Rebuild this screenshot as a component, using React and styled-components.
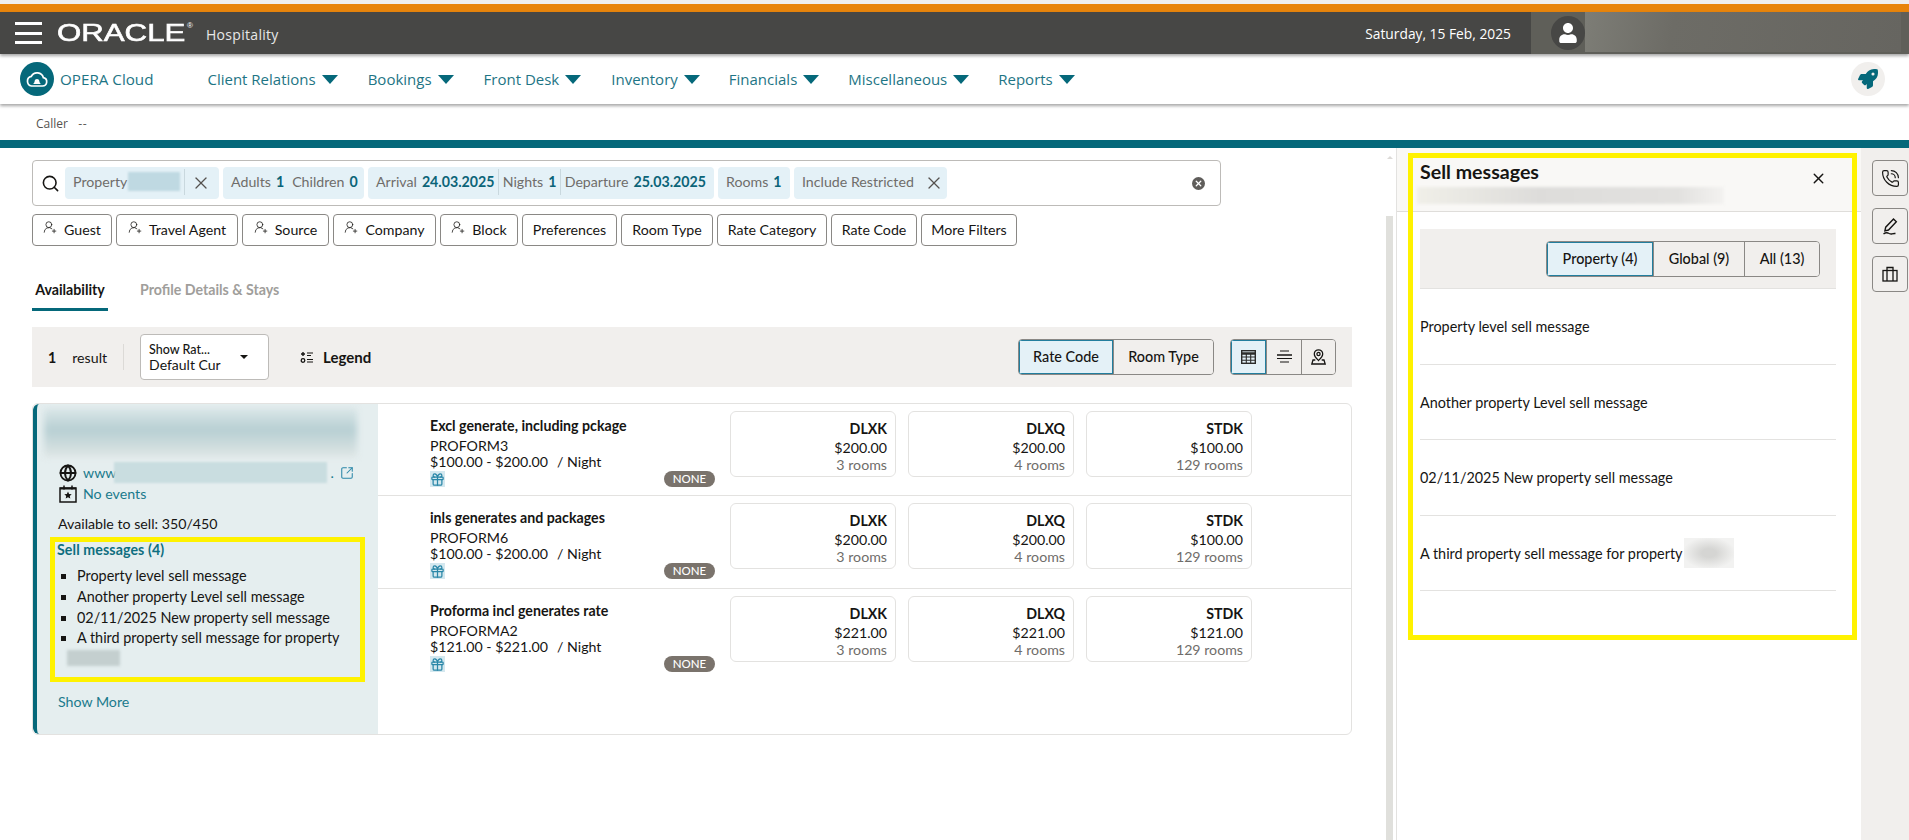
import React from "react"
import styled, { createGlobalStyle } from "styled-components"
import {
  Gift,
  Globe,
  PhoneCall,
  Search,
  SquareArrowOutUpRight,
  UserRoundPlus,
  X,
} from "lucide-react"
import { FaRocket, FaUser } from "react-icons/fa"

const GlobalStyle = createGlobalStyle`
  html, body {
    margin: 0;
    padding: 0;
    background: #fff;
    overflow: hidden;
  }
  * {
    box-sizing: border-box;
  }
  body {
    font-family: Lato, "Noto Sans", sans-serif;
    color: #161513;
    font-size: 14.2px;
  }
`

const navItems = [
  ["Client Relations", 54],
  ["Bookings", 30],
  ["Front Desk", 30],
  ["Inventory", 30],
  ["Financials", 29],
  ["Miscellaneous", 29],
  ["Reports", 29],
]

const filters = [
  ["Guest", 80, true],
  ["Travel Agent", 122, true],
  ["Source", 87, true],
  ["Company", 103, true],
  ["Block", 78, true],
  ["Preferences", 95],
  ["Room Type", 92],
  ["Rate Category", 110],
  ["Rate Code", 86],
  ["More Filters", 96],
]

const rates = [
  {
    name: "Excl generate, including pckage",
    code: "PROFORM3",
    range: "$100.00 - $200.00",
    rooms: [
      ["DLXK", "$200.00", "3 rooms"],
      ["DLXQ", "$200.00", "4 rooms"],
      ["STDK", "$100.00", "129 rooms"],
    ],
    height: 91,
  },
  {
    name: "inls generates and packages",
    code: "PROFORM6",
    range: "$100.00 - $200.00",
    rooms: [
      ["DLXK", "$200.00", "3 rooms"],
      ["DLXQ", "$200.00", "4 rooms"],
      ["STDK", "$100.00", "129 rooms"],
    ],
    height: 93,
  },
  {
    name: "Proforma incl generates rate",
    code: "PROFORMA2",
    range: "$121.00 - $221.00",
    rooms: [
      ["DLXK", "$221.00", "3 rooms"],
      ["DLXQ", "$221.00", "4 rooms"],
      ["STDK", "$121.00", "129 rooms"],
    ],
    height: 146,
  },
]

const messages = [
  "Property level sell message",
  "Another property Level sell message",
  "02/11/2025 New property sell message",
  "A third property sell message for property",
]

function CloudBell() {
  return (
    <svg width="24" height="20" viewBox="0 0 24 20" fill="none">
      <path
        d="M6.5 17h11a4.2 4.2 0 0 0 .9-8.3A6.5 6.5 0 0 0 6.3 7.4a4.9 4.9 0 0 0 .2 9.600z"
        stroke="#fff"
        strokeWidth="1.7"
      />
      <path
        d="M8 15c1-.7 1.5-1.7 1.7-3.1.2-1.2 1.1-1.9 2.3-1.9s2.1.7 2.3 1.9c.2 1.4.7 2.4 1.7 3.1z"
        fill="#fff"
      />
    </svg>
  )
}

function LegendIcon() {
  return (
    <svg width="14" height="13" viewBox="0 0 14 13" fill="none" stroke="#161513">
      <path d="M3 1v4M1 3h4" strokeWidth="1.4" />
      <circle cx="3" cy="9.5" r="1.8" strokeWidth="1.3" />
      <path d="M7 2h6M7 4.5h4M7 8.5h6M7 11h6" strokeWidth="1.2" />
    </svg>
  )
}

function TableIcon() {
  return (
    <svg width="15" height="14" viewBox="0 0 15 14" fill="none" stroke="#2b2b2a">
      <rect x="0.7" y="0.7" width="13.6" height="12.6" strokeWidth="1.4" />
      <path d="M1 3.5h13" strokeWidth="2.4" />
      <path d="M1 7h13M1 10.2h13M5.3 4v9M9.7 4v9" strokeWidth="1.1" />
    </svg>
  )
}

function CenterLinesIcon() {
  return (
    <svg width="15" height="13" viewBox="0 0 15 13" fill="none" stroke="#161513">
      <path d="M3 1h9" strokeWidth="1.2" />
      <path d="M0 5h15" strokeWidth="1.5" />
      <path d="M0 8.500h15" strokeWidth="1.2" />
      <path d="M3 12h9" strokeWidth="1.2" />
    </svg>
  )
}

function PinUserIcon() {
  return (
    <svg width="15" height="16" viewBox="0 0 15 16" fill="none" stroke="#161513" strokeWidth="1.3">
      <path d="M7.5 11.5C5.3 9.3 3.3 7.6 3.3 5A4.2 4.2 0 0 1 11.7 5c0 2.6-2 4.3-4.2 6.5z" />
      <circle cx="7.5" cy="5" r="1.6" />
      <path d="M4.3 11H2L.8 15h13.4L13 11h-2.3" />
    </svg>
  )
}

function CalendarStar() {
  return (
    <svg width="18" height="18" viewBox="0 0 18 18" fill="none" stroke="#161513">
      <path d="M1 3h16v14H1z" strokeWidth="1.5" />
      <path d="M1 3.5h16" strokeWidth="2" />
      <path d="M5 .5v4M13 .5v4" strokeWidth="1.5" />
      <path
        d="M9 6.5l1.1 2.4 2.6.3-1.9 1.800.5 2.600L9 12.300l-2.300 1.300.5-2.600-1.900-1.800 2.600-.3z"
        fill="#161513"
        stroke="none"
      />
    </svg>
  )
}

function PenIcon() {
  return (
    <svg width="19" height="19" viewBox="0 0 19 19" fill="none" stroke="#161513" strokeWidth="1.4">
      <path d="M12.5 2l2.8 2.8-7.8 8.2-3.600.9.8-3.700z" />
      <path d="M2.500 17c1.500-1.200 3-1.700 4.500-1 1.500.8 2.500 1.300 4 .8 1-.3 2-.5 3.500-.3" />
    </svg>
  )
}

function CaseIcon() {
  return (
    <svg width="16" height="16" viewBox="0 0 16 16" fill="none" stroke="#161513" strokeWidth="1.3">
      <rect x="1" y="4.5" width="14" height="10.5" />
      <path d="M5 4.5v-3h6v3M5 4.5V15M11 4.5V15" />
    </svg>
  )
}

function RateRow({ rate }) {
  return (
    <RateRowBox $height={rate.height}>
      <RateInfo>
        <RateName>{rate.name}</RateName>
        <RateCode>{rate.code}</RateCode>
        <RateRange>
          {rate.range}
          <span>/ Night</span>
        </RateRange>
        <RateFoot>
          <GiftBox>
            <Gift size={15} strokeWidth={2} />
          </GiftBox>
          <NoneBadge>NONE</NoneBadge>
        </RateFoot>
      </RateInfo>
      <Tiles>
        {rate.rooms.map(([code, price, left]) => (
          <Tile key={code}>
            <TileCode>{code}</TileCode>
            <TilePrice>{price}</TilePrice>
            <TileRooms>{left}</TileRooms>
          </Tile>
        ))}
      </Tiles>
    </RateRowBox>
  )
}

export default function App() {
  return (
    <Page>
      <GlobalStyle />
      <TopStrip />
      <OrangeBar />
      <Header>
        <Brand>
          <Burger>
            <span />
            <span />
            <span />
          </Burger>
          <OracleMark>
            <OracleWord>ORACLE</OracleWord>
            <OracleReg>®</OracleReg>
          </OracleMark>
          <HospitalityText>Hospitality</HospitalityText>
        </Brand>
        <HeaderRight>
          <DateText>Saturday, 15 Feb, 2025</DateText>
          <UserArea>
            <Avatar>
              <FaUser size={20} color="#fff" />
            </Avatar>
            <UserBlur />
          </UserArea>
        </HeaderRight>
      </Header>
      <Nav>
        <AppName>
          <AppBadge>
            <CloudBell />
          </AppBadge>
          <AppTitle>OPERA Cloud</AppTitle>
        </AppName>
        {navItems.map(([label, gap]) => (
          <NavItem key={label} $gap={gap}>
            {label}
            <Caret />
          </NavItem>
        ))}
        <RocketButton>
          <FaRocket size={20} color="#05687a" />
        </RocketButton>
      </Nav>
      <CallerRow>
        <CallerLabel>Caller</CallerLabel>
        <span>--</span>
      </CallerRow>
      <TealBar />
      <Body>
        <Main>
          <SearchBox>
            <SearchIcon>
              <Search size={19} strokeWidth={2} />
            </SearchIcon>
            <Chip $width={154}>
              <ChipLabel>Property</ChipLabel>
              <ChipBlur />
              <ChipDivider />
              <ChipClose>
                <X size={20} strokeWidth={1.5} />
              </ChipClose>
            </Chip>
            <Chip $width={141}>
              <ChipLabel>Adults</ChipLabel>
              <ChipValue>1</ChipValue>
              <ChipDivider />
              <ChipLabel>Children</ChipLabel>
              <ChipValue>0</ChipValue>
            </Chip>
            <Chip $width={346}>
              <ChipLabel>Arrival</ChipLabel>
              <ChipValue>24.03.2025</ChipValue>
              <ChipDivider />
              <ChipLabel>Nights</ChipLabel>
              <ChipValue>1</ChipValue>
              <ChipDivider />
              <ChipLabel>Departure</ChipLabel>
              <ChipValue>25.03.2025</ChipValue>
            </Chip>
            <Chip $width={72}>
              <ChipLabel>Rooms</ChipLabel>
              <ChipValue>1</ChipValue>
            </Chip>
            <Chip $width={153}>
              <ChipLabel>Include Restricted</ChipLabel>
              <ChipDivider />
              <ChipClose>
                <X size={20} strokeWidth={1.5} />
              </ChipClose>
            </Chip>
            <ClearDot>
              <X size={9} strokeWidth={3.5} color="#fff" />
            </ClearDot>
          </SearchBox>
          <FilterRow>
            {filters.map(([label, width, withIcon]) => (
              <FilterButton key={label} $width={width}>
                {withIcon && <UserRoundPlus size={14} strokeWidth={1.3} />}
                {label}
              </FilterButton>
            ))}
          </FilterRow>
          <Tabs>
            <Tab $active>Availability</Tab>
            <Tab>Profile Details &amp; Stays</Tab>
          </Tabs>
          <ResultBar>
            <ResultCount>1</ResultCount>
            <ResultText>result</ResultText>
            <ResultDivider />
            <CurrencySelect>
              <CurrencyText>
                <CurrencyTitle>Show Rat...</CurrencyTitle>
                <CurrencyValue>Default Curi</CurrencyValue>
              </CurrencyText>
              <SmallCaret />
            </CurrencySelect>
            <LegendButton>
              <LegendIcon />
              Legend
            </LegendButton>
            <ResultSpacer />
            <Segments>
              <Segment $active $width={94}>Rate Code</Segment>
              <Segment $width={100}>Room Type</Segment>
            </Segments>
            <Segments>
              <Segment $active $width={35}>
                <TableIcon />
              </Segment>
              <Segment $width={35}>
                <CenterLinesIcon />
              </Segment>
              <Segment $width={34}>
                <PinUserIcon />
              </Segment>
            </Segments>
          </ResultBar>
          <ResultCard>
            <HotelPane>
              <HotelBlur />
              <LinkRow>
                <Globe size={18} strokeWidth={2.5} color="#161513" />
                <LinkText>www</LinkText>
                <UrlBlur />
                <UrlDot>.</UrlDot>
                <ExternalIcon>
                  <SquareArrowOutUpRight size={14} strokeWidth={1.8} />
                </ExternalIcon>
              </LinkRow>
              <LinkRow>
                <CalendarStar />
                <LinkText>No events</LinkText>
              </LinkRow>
              <AvailableText>Available to sell: 350/450</AvailableText>
              <SellBox>
                <SellTitle>Sell messages (4)</SellTitle>
                <SellList>
                  {messages.map((text) => (
                    <li key={text}>{text}</li>
                  ))}
                </SellList>
                <SellBlur />
              </SellBox>
              <ShowMore>Show More</ShowMore>
            </HotelPane>
            <RateList>
              {rates.map((rate) => (
                <RateRow key={rate.code} rate={rate} />
              ))}
            </RateList>
          </ResultCard>
        </Main>
        <ScrollGutter>
          <ScrollArrow />
          <ScrollThumb />
        </ScrollGutter>
        <SidePanel>
          <PanelHeader>
            <div>
              <PanelTitle>Sell messages</PanelTitle>
              <PanelBlur />
            </div>
            <PanelClose>
              <X size={17} strokeWidth={2} />
            </PanelClose>
          </PanelHeader>
          <PanelBody>
            <PanelTabs>
              <Segments>
                <Segment $active $width={106}>Property (4)</Segment>
                <Segment $width={91}>Global (9)</Segment>
                <Segment $width={75}>All (13)</Segment>
              </Segments>
            </PanelTabs>
            {messages.map((text, i) => (
              <MessageRow key={text}>
                {text}
                {i === 3 && <MessageBlur />}
              </MessageRow>
            ))}
          </PanelBody>
          <Highlight />
        </SidePanel>
        <ToolRail>
          <ToolButton>
            <PhoneCall size={19} strokeWidth={1.5} />
          </ToolButton>
          <ToolButton>
            <PenIcon />
          </ToolButton>
          <ToolButton>
            <CaseIcon />
          </ToolButton>
        </ToolRail>
      </Body>
    </Page>
  )
}

const Page = styled.div`
  width: 1909px;
  height: 840px;
  display: flex;
  flex-direction: column;
  overflow: hidden;
`
const TopStrip = styled.div`
  height: 4px;
  background: #efefef;
`
const OrangeBar = styled.div`
  height: 8px;
  background: #e8850c;
`
const Header = styled.header`
  height: 42px;
  background: #474745;
  color: #fff;
  display: flex;
  justify-content: space-between;
  box-shadow: 0 2px 3px rgba(0, 0, 0, 0.35);
  position: relative;
  z-index: 2;
`
const Brand = styled.div`
  display: flex;
  align-items: center;
  padding-left: 15px;
`
const Burger = styled.div`
  width: 27px;
  height: 22px;
  display: flex;
  flex-direction: column;
  justify-content: space-between;
  margin-right: 15px;
  span {
    height: 3px;
    background: #fff;
  }
`
const OracleMark = styled.div`
  width: 138px;
  height: 24px;
  margin-right: 11px;
  display: flex;
  align-items: flex-start;
`
const OracleWord = styled.div`
  width: 130px;
  font-family: "Liberation Sans", sans-serif;
  font-size: 24px;
  line-height: 24px;
  color: #fff;
  -webkit-text-stroke: 0.6px #fff;
  transform: scaleX(1.3);
  transform-origin: left center;
  white-space: nowrap;
`
const OracleReg = styled.span`
  font-family: "Liberation Sans", sans-serif;
  font-size: 8px;
  line-height: 10px;
  color: #fff;
`
const HospitalityText = styled.span`
  font-family: "Open Sans", sans-serif;
  font-size: 14px;
  color: #e8e8e8;
  letter-spacing: 0.3px;
  margin-top: 2px;
`
const HeaderRight = styled.div`
  display: flex;
  align-items: stretch;
`
const DateText = styled.div`
  font-family: "Open Sans", sans-serif;
  font-size: 13.8px;
  align-self: center;
  margin-right: 20px;
`
const UserArea = styled.div`
  width: 378px;
  background: #5f5f59;
  display: flex;
  align-items: center;
  padding-left: 20px;
  overflow: hidden;
`
const Avatar = styled.div`
  width: 34px;
  height: 34px;
  border-radius: 50%;
  background: #474745;
  display: flex;
  align-items: center;
  justify-content: center;
  flex-shrink: 0;
`
const UserBlur = styled.div`
  width: 316px;
  height: 40px;
  margin-top: -2px;
  background: linear-gradient(100deg, #7d7d76 0%, #6d6c66 28%, #666560 100%);
`
const Nav = styled.nav`
  height: 50px;
  background: #fff;
  display: flex;
  align-items: center;
  padding-left: 20px;
  box-shadow: 0 2px 3px rgba(0, 0, 0, 0.35);
  position: relative;
  z-index: 1;
`
const AppName = styled.div`
  display: flex;
  align-items: center;
  gap: 6px;
`
const AppBadge = styled.div`
  width: 34px;
  height: 34px;
  border-radius: 50%;
  background: #05687a;
  display: flex;
  align-items: center;
  justify-content: center;
`
const AppTitle = styled.span`
  font-family: "Open Sans", sans-serif;
  font-size: 15.2px;
  color: #1e7585;
`
const NavItem = styled.div`
  font-family: "Open Sans", sans-serif;
  font-size: 15px;
  color: #1e7585;
  display: flex;
  align-items: center;
  gap: 6px;
  margin-left: ${(p) => p.$gap}px;
`
const Caret = styled.span`
  width: 0;
  height: 0;
  border-left: 8px solid transparent;
  border-right: 8px solid transparent;
  border-top: 9px solid #05687a;
`
const RocketButton = styled.div`
  width: 34px;
  height: 34px;
  border-radius: 50%;
  background: #f1efed;
  display: flex;
  align-items: center;
  justify-content: center;
  margin-left: auto;
  margin-right: 24px;
`
const CallerRow = styled.div`
  height: 36px;
  display: flex;
  align-items: center;
  padding: 3px 0 0 36px;
  gap: 10px;
  font-size: 12px;
  color: #55524f;
`
const CallerLabel = styled.span`
  font-family: "Open Sans", sans-serif;
`
const TealBar = styled.div`
  height: 8px;
  background: #05687a;
`
const Body = styled.div`
  flex: 1;
  display: flex;
  min-height: 0;
`
const Main = styled.main`
  width: 1386px;
  padding: 12px 0 0 32px;
`
const SearchBox = styled.div`
  width: 1189px;
  height: 46px;
  border: 1px solid #bdbbb8;
  border-radius: 4px;
  display: flex;
  align-items: center;
  gap: 4px;
  padding-left: 8px;
`
const SearchIcon = styled.div`
  width: 20px;
  display: flex;
`
const Chip = styled.div`
  width: ${(p) => p.$width}px;
  height: 32px;
  background: #e4f1f7;
  border-radius: 4px;
  display: flex;
  align-items: center;
  padding: 0 8px 3px;
  gap: 4px;
  white-space: nowrap;
`
const ChipLabel = styled.span`
  color: #6f6d6a;
`
const ChipValue = styled.span`
  color: #0b6478;
  font-weight: 700;
  margin-left: 1px;
`
const ChipDivider = styled.span`
  width: 1px;
  height: 26px;
  background: #c9d8de;
`
const ChipBlur = styled.span`
  width: 57px;
  height: 19px;
  margin-left: -3px;
  background: #bfd9e2;
  filter: blur(1px);
`
const ChipClose = styled.span`
  display: flex;
  color: #55524f;
  margin: 2px 0 0 2px;
`
const ClearDot = styled.div`
  width: 13px;
  height: 13px;
  border-radius: 50%;
  background: #5f5d5a;
  display: flex;
  align-items: center;
  justify-content: center;
  margin-left: auto;
  margin-right: 15px;
`
const FilterRow = styled.div`
  display: flex;
  gap: 4px;
  margin-top: 8px;
`
const FilterButton = styled.div`
  width: ${(p) => p.$width}px;
  height: 32px;
  border: 1px solid #8a8885;
  border-radius: 4px;
  display: flex;
  align-items: center;
  justify-content: center;
  gap: 7px;
  background: #fff;
  white-space: nowrap;
  padding-bottom: 2px;
  svg {
    margin-top: -4px;
  }
`
const Tabs = styled.div`
  display: flex;
  gap: 32px;
  margin-top: 33px;
  height: 32px;
`
const Tab = styled.div`
  width: ${(p) => (p.$active ? "76px" : "auto")};
  height: 32px;
  text-align: center;
  font-weight: 700;
  line-height: 22px;
  color: ${(p) => (p.$active ? "#161513" : "#a09e9b")};
  border-bottom: ${(p) => (p.$active ? "3px solid #05687a" : "0")};
`
const ResultBar = styled.div`
  width: 1320px;
  height: 60px;
  margin-top: 16px;
  background: #f1efed;
  display: flex;
  align-items: center;
  padding: 0 16px;
`
const ResultCount = styled.span`
  font-weight: 700;
  margin-right: 16px;
`
const ResultText = styled.span`
  margin-right: 16px;
`
const ResultDivider = styled.span`
  width: 1px;
  height: 26px;
  background: #dcdad7;
  margin-right: 16px;
`
const CurrencySelect = styled.div`
  width: 129px;
  height: 46px;
  background: #fff;
  border: 1px solid #bdbbb8;
  border-radius: 4px;
  display: flex;
  align-items: center;
  justify-content: space-between;
  padding: 0 20px 0 8px;
`
const CurrencyText = styled.div`
  width: 72px;
  overflow: hidden;
  white-space: nowrap;
  line-height: 15px;
`
const CurrencyTitle = styled.div`
  font-size: 12.5px;
  font-weight: 500;
`
const CurrencyValue = styled.div`
  font-size: 14px;
`
const SmallCaret = styled.span`
  width: 0;
  height: 0;
  border-left: 4px solid transparent;
  border-right: 4px solid transparent;
  border-top: 4px solid #161513;
`
const LegendButton = styled.div`
  display: flex;
  align-items: center;
  gap: 9px;
  font-size: 15px;
  font-weight: 700;
  margin-left: 31px;
`
const ResultSpacer = styled.div`
  flex: 1;
`
const Segments = styled.div`
  display: flex;
  height: 36px;
  margin-left: 16px;
  border: 1px solid #8a8885;
  border-radius: 4px;
  overflow: hidden;
`
const Segment = styled.div`
  width: ${(p) => p.$width}px;
  display: flex;
  align-items: center;
  justify-content: center;
  background: ${(p) => (p.$active ? "#e4f1f7" : "#f1efed")};
  font-weight: 500;
  font-size: 14.4px;
  padding-bottom: 1px;
  box-shadow: ${(p) => (p.$active ? "inset 0 0 0 1px #227e9e" : "none")};
  & + & {
    border-left: 1px solid #8a8885;
  }
`
const ResultCard = styled.div`
  width: 1320px;
  height: 332px;
  margin-top: 16px;
  border: 1px solid #e3e2e0;
  border-radius: 6px;
  display: flex;
  overflow: hidden;
`
const HotelPane = styled.div`
  width: 345px;
  background: #e5eeef;
  border-left: 4px solid #05687a;
  border-radius: 6px 0 0 6px;
  padding: 4px 0 0 7px;
`
const HotelBlur = styled.div`
  width: 313px;
  height: 49px;
  background: linear-gradient(180deg, #dbe7e8, #b7cfd3 45%, #dfe6e5);
  filter: blur(3px);
  margin-bottom: 5px;
`
const LinkRow = styled.div`
  display: flex;
  align-items: center;
  gap: 6px;
  margin-left: 15px;
  height: 21px;
`
const LinkText = styled.span`
  color: #1a7a8c;
`
const UrlBlur = styled.span`
  width: 213px;
  height: 21px;
  margin-left: -8px;
  background: #c9dde0;
  filter: blur(1px);
`
const UrlDot = styled.span`
  color: #1a7a8c;
  margin-left: -3px;
`
const ExternalIcon = styled.span`
  display: flex;
  color: #2a87a8;
`
const AvailableText = styled.div`
  margin: 10px 0 0 14px;
  line-height: 20px;
`
const SellBox = styled.div`
  width: 315px;
  height: 145px;
  margin: 3px 0 0 6px;
  border: 5px solid #fff200;
  padding: 0 0 0 2px;
`
const SellTitle = styled.div`
  color: #0f6f80;
  font-weight: 700;
  letter-spacing: 0.1px;
  line-height: 15px;
`
const SellList = styled.ul`
  margin: 9px 0 0;
  padding: 0 0 0 20px;
  list-style: square;
  font-size: 14.4px;
  li {
    line-height: 20.8px;
  }
`
const SellBlur = styled.div`
  width: 53px;
  height: 16px;
  margin: 1px 0 0 10px;
  background: #c4cfcf;
  filter: blur(1.5px);
`
const ShowMore = styled.div`
  color: #1a7a8c;
  margin: 11px 0 0 14px;
`
const RateList = styled.div`
  flex: 1;
`
const RateRowBox = styled.div`
  height: ${(p) => p.$height}px;
  display: flex;
  padding: 7px 0 0 52px;
  & + & {
    border-top: 1px solid #e3e2e0;
  }
`
const RateInfo = styled.div`
  width: 285px;
  margin-right: 15px;
`
const RateName = styled.div`
  font-weight: 700;
  line-height: 20px;
  margin-top: 5px;
`
const RateCode = styled.div`
  line-height: 18px;
  margin-top: 1px;
`
const RateRange = styled.div`
  line-height: 16px;
  margin-top: -1px;
  display: flex;
  gap: 9px;
`
const RateFoot = styled.div`
  display: flex;
  justify-content: space-between;
  align-items: center;
  margin-top: 1px;
`
const GiftBox = styled.span`
  width: 15px;
  height: 16px;
  display: flex;
  align-items: center;
  justify-content: center;
  background: #d4e8ef;
  color: #2a87a8;
`
const NoneBadge = styled.span`
  width: 51px;
  height: 16px;
  border-radius: 8px;
  background: #7a736c;
  color: #fff;
  font-size: 11.5px;
  font-weight: 500;
  line-height: 16px;
  text-align: center;
`
const Tiles = styled.div`
  display: flex;
  gap: 12px;
`
const Tile = styled.div`
  width: 166px;
  height: 66px;
  border: 1px solid #e3e2e0;
  border-radius: 6px;
  padding: 8px 8px 0 0;
  text-align: right;
`
const TileCode = styled.div`
  font-weight: 700;
  line-height: 18px;
`
const TilePrice = styled.div`
  line-height: 19px;
`
const TileRooms = styled.div`
  line-height: 15px;
  color: #6f6d6a;
`
const ScrollGutter = styled.div`
  width: 10px;
  padding-right: 3px;
`
const ScrollArrow = styled.div`
  width: 0;
  height: 0;
  margin: 8px 0 0 1px;
  border-left: 3px solid transparent;
  border-right: 3px solid transparent;
  border-bottom: 3px solid #dcdad7;
`
const ScrollThumb = styled.div`
  height: 640px;
  margin-top: 57px;
  background: #e0e0dc;
`
const SidePanel = styled.aside`
  width: 465px;
  border-left: 1px solid #e3e2e0;
  position: relative;
`
const PanelHeader = styled.div`
  height: 64px;
  background: #f9f8f6;
  border-bottom: 1px solid #dfddda;
  display: flex;
  justify-content: space-between;
  align-items: flex-start;
  padding: 12px 34px 0 23px;
`
const PanelTitle = styled.div`
  font-size: 19.6px;
  font-weight: 700;
  line-height: 24px;
`
const PanelBlur = styled.div`
  width: 307px;
  height: 17px;
  margin: 3px 0 0 -3px;
  background: linear-gradient(90deg, #f0efe8, #dddcda 40%, #e2e1df 85%, #f3f2f0);
  filter: blur(1.5px);
`
const PanelClose = styled.div`
  display: flex;
  color: #161513;
  margin-top: 10px;
`
const PanelBody = styled.div`
  padding: 17px 25px 0 23px;
`
const PanelTabs = styled.div`
  height: 60px;
  background: #f1efed;
  border-bottom: 1px solid #e3e2e0;
  display: flex;
  align-items: center;
  justify-content: flex-end;
  padding-right: 16px;
`
const MessageRow = styled.div`
  height: 75.5px;
  border-bottom: 1px solid #e3e2e0;
  display: flex;
  align-items: center;
  padding-top: 1px;
  font-size: 14.4px;
`
const MessageBlur = styled.span`
  width: 50px;
  height: 30px;
  margin-left: 1px;
  background: radial-gradient(ellipse, #d5d5d3 20%, #f2f2f1 75%);
`
const Highlight = styled.div`
  position: absolute;
  left: 11px;
  top: 5px;
  width: 449px;
  height: 487px;
  border: 5px solid #fff200;
  pointer-events: none;
`
const ToolRail = styled.div`
  flex: 1;
  background: #f1efed;
  padding: 12px 1px 0 11px;
  display: flex;
  flex-direction: column;
  gap: 12px;
`
const ToolButton = styled.div`
  width: 36px;
  height: 36px;
  border: 1px solid #8a8885;
  border-radius: 4px;
  display: flex;
  align-items: center;
  justify-content: center;
`
